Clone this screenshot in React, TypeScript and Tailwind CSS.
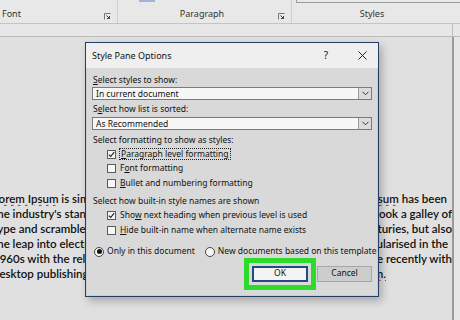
import React from 'react';

const docLines: { left: string; right: string; leftSquiggle?: string; rightSquiggle?: string; pad: string }[] = [
  { left: 'is simply', leftSquiggle: 'Lorem Ipsum', right: 'has been', rightSquiggle: 'Ipsum', pad: 'pr-[5px]' },
  { left: "the industry's standard", right: 'printer took a galley of', pad: 'pr-0' },
  { left: 'type and scrambled it', right: 'five centuries, but also', pad: 'pr-0' },
  { left: 'the leap into electronic', right: 'It was popularised in the', pad: 'pr-[4px]' },
  { left: '1960s with the release', right: 'and more recently with', pad: 'pr-0' },
  { left: 'desktop publishing software', right: '', rightSquiggle: 'Ipsum.', pad: 'pr-[66px]' },
];

const Launcher = () => (
  <svg width="7" height="7" viewBox="0 0 7 7" className="shrink-0">
    <path d="M0.5 6.5V0.5H6.5" fill="none" stroke="#777" strokeWidth="1" />
    <path d="M2.5 2.5L5.5 5.5M3 5.5H5.5V3" fill="none" stroke="#444" strokeWidth="1" />
  </svg>
);

const Check = ({ checked }: { checked?: boolean }) => (
  <span className="w-[9px] h-[9px] border border-[#5a5a5a] bg-[#f6f6f6] flex items-center justify-center shrink-0">
    {checked && (
      <svg width="7" height="7" viewBox="0 0 7 7">
        <path d="M0.8 3.6L2.7 5.4L6.2 1.2" fill="none" stroke="#222" strokeWidth="1.1" />
      </svg>
    )}
  </span>
);

const Radio = ({ checked }: { checked?: boolean }) => (
  <span className="w-[10px] h-[10px] rounded-full border border-[#444] bg-[#f6f6f6] flex items-center justify-center shrink-0">
    {checked && <span className="w-[5px] h-[5px] rounded-full bg-[#111]" />}
  </span>
);

const Select = ({ value }: { value: string }) => (
  <div className="mx-[5px] h-[13px] flex border border-[#7a7a7a] bg-[#f7f7f7]">
    <div className="flex-1 pl-[3px] leading-[11px]">{value}</div>
    <div className="w-[13px] border-l border-[#9a9a9a] bg-[#dcdcdc] flex items-center justify-center">
      <svg width="7" height="5" viewBox="0 0 7 5">
        <path d="M0.5 0.8L3.5 3.8L6.5 0.8" fill="none" stroke="#333" strokeWidth="1" />
      </svg>
    </div>
  </div>
);

const App: React.FC = () => {
  return (
    <div className="w-[460px] h-[320px] relative overflow-hidden bg-[#e0e0e0] flex flex-col" style={{ fontFamily: '"Noto Sans", sans-serif' }}>
      {/* ribbon */}
      <div className="h-[24px] bg-[#e8e8e8] border-b border-[#c4c4c4] flex text-[9px] text-[#333] shrink-0">
        <div className="w-[118px] border-r border-[#cfcfcf] flex items-end justify-between pl-[2px] pr-[6px] pb-[3px]">
          <span>Font</span>
          <Launcher />
        </div>
        <div className="w-[174px] border-r border-[#cfcfcf] flex items-end pb-[3px] relative">
          <div className="absolute left-[21px] top-0 w-[16px] h-[2px] bg-[#9fb4d6]" />
          <span className="flex-1 text-center pl-[8px]">Paragraph</span>
          <span className="pr-[6px]"><Launcher /></span>
        </div>
        <div className="flex-1 flex flex-col">
          <div className="h-[3px] ml-[4px] border-b border-l border-[#9c9c9c]" />
          <div className="flex-1 flex items-end justify-center pb-[3px] pr-[8px]">Styles</div>
        </div>
      </div>
      {/* ruler strip */}
      <div className="h-[13px] bg-[#e7e7e7] border-b border-[#bcbcbc] shrink-0 flex justify-end">
        <div className="w-[8px] border-l border-[#bdbdbd]" />
      </div>
      {/* document area */}
      <div className="flex-1 flex">
        <div className="flex-1 pt-[154px] text-[11.5px] font-semibold text-[#111]" style={{ fontFamily: 'Lato, "Liberation Sans", sans-serif' }}>
          {docLines.map((l, i) => (
            <div key={i} className="h-[15px] leading-[15px] flex whitespace-nowrap">
              <div className="w-[86px] overflow-hidden flex">
                <span className="-ml-[7px] shrink-0">
                  {l.leftSquiggle && <span className="underline decoration-wavy decoration-red-600 decoration-1">{l.leftSquiggle}</span>}
                  {l.leftSquiggle ? ' ' : ''}{l.left}
                </span>
              </div>
              <div className="flex-1" />
              <div className={`w-[74px] overflow-hidden flex justify-end ${l.pad}`}>
                <span className="shrink-0">
                  {l.rightSquiggle && <span className="underline decoration-wavy decoration-red-600 decoration-1">{l.rightSquiggle}</span>}
                  {l.rightSquiggle && l.right ? ' ' : ''}{l.right}
                </span>
              </div>
            </div>
          ))}
        </div>
        <div className="w-[8px] border-l-2 border-[#9a9a9a] bg-[#e6e6e6]" />
      </div>

      {/* dialog */}
      <div className="absolute left-[85px] top-[42px] w-[294px] h-[255px] border border-[#243f66] bg-[#d9d9d9] shadow-[3px_4px_8px_rgba(0,0,0,0.25)] flex flex-col text-[8.5px] text-[#111]">
        <div className="h-[25px] bg-[#efefef] flex items-center pl-[6px] pr-[11px] text-[9px]">
          <span className="flex-1">Style Pane Options</span>
          <span className="mr-[30px] text-[10px]">?</span>
          <svg width="9" height="9" viewBox="0 0 9 9">
            <path d="M0.5 0.5L8.5 8.5M8.5 0.5L0.5 8.5" stroke="#222" strokeWidth="1" />
          </svg>
        </div>
        <div className="flex-1 border-x border-b border-[#c9ced6] flex flex-col pt-[4px]">
          <div className="pl-[6px] h-[15px] leading-[15px]"><u>S</u>elect styles to show:</div>
          <Select value="In current document" />
          <div className="pl-[6px] h-[17px] leading-[17px]">S<u>e</u>lect how list is sorted:</div>
          <Select value="As Recommended" />
          <div className="pl-[6px] h-[17px] leading-[19px]">Select formatting to show as styles:</div>
          <div className="pl-[20px] flex flex-col">
            <div className="h-[14.5px] flex items-center gap-[3px]">
              <Check checked />
              <span className="border border-dotted border-[#222] px-[1px] leading-[10px]"><u>P</u>aragraph level formatting</span>
            </div>
            <div className="h-[14.5px] flex items-center gap-[4px]">
              <Check />
              <span>F<u>o</u>nt formatting</span>
            </div>
            <div className="h-[14.5px] flex items-center gap-[4px]">
              <Check />
              <span><u>B</u>ullet and numbering formatting</span>
            </div>
          </div>
          <div className="pl-[6px] h-[18px] flex items-end pb-[1px]">Select how built-in style names are shown</div>
          <div className="pl-[20px] flex flex-col">
            <div className="h-[14.5px] flex items-center gap-[4px]">
              <Check checked />
              <span>Sho<u>w</u> next heading when previous level is used</span>
            </div>
            <div className="h-[14.5px] flex items-center gap-[4px]">
              <Check />
              <span><u>H</u>ide built-in name when alternate name exists</span>
            </div>
          </div>
          <div className="pl-[7px] mt-[8px] h-[12px] flex items-center">
            <Radio checked />
            <span className="ml-[3px]">Only in this document</span>
            <span className="ml-[10px]"><Radio /></span>
            <span className="ml-[3px]">New documents based on this template</span>
          </div>
          <div className="flex justify-end items-center pr-[5px] gap-[1px]">
            <div className="border-[5px] border-[#2bdc2b] p-[3px]">
              <div className="w-[56px] h-[16px] border-2 border-[#1f4a86] bg-[#f4f4f4] flex items-center justify-center">OK</div>
            </div>
            <div className="w-[55px] h-[16px] border border-[#a6a6a6] bg-[#cdcdcd] flex items-center justify-center">Cancel</div>
          </div>
        </div>
      </div>
    </div>
  );
};

export default App;
